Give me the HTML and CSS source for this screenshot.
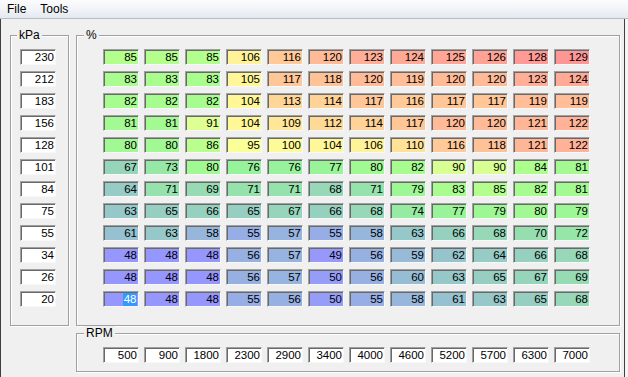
FILE: index.html
```html
<!DOCTYPE html>
<html>
<head>
<meta charset="utf-8">
<link rel="stylesheet" href="styles.css">
</head>
<body>
<div class="menubar">
  <span class="menu-item">File</span>
  <span class="menu-item">Tools</span>
</div>
<div class="client">
  <div class="group group-kpa">
    <span class="group-label">kPa</span>
    <div class="col">
      <div class="box">230</div>
      <div class="box">212</div>
      <div class="box">183</div>
      <div class="box">156</div>
      <div class="box">128</div>
      <div class="box">101</div>
      <div class="box">84</div>
      <div class="box">75</div>
      <div class="box">55</div>
      <div class="box">34</div>
      <div class="box">26</div>
      <div class="box">20</div>
    </div>
  </div>
  <div class="right">
    <div class="group group-ve">
      <span class="group-label">%</span>
      <div class="grid">
        <div class="box ve">85</div><div class="box ve">85</div><div class="box ve">85</div><div class="box ve">106</div><div class="box ve">116</div><div class="box ve">120</div><div class="box ve">123</div><div class="box ve">124</div><div class="box ve">125</div><div class="box ve">126</div><div class="box ve">128</div><div class="box ve">129</div>
        <div class="box ve">83</div><div class="box ve">83</div><div class="box ve">83</div><div class="box ve">105</div><div class="box ve">117</div><div class="box ve">118</div><div class="box ve">120</div><div class="box ve">119</div><div class="box ve">120</div><div class="box ve">120</div><div class="box ve">123</div><div class="box ve">124</div>
        <div class="box ve">82</div><div class="box ve">82</div><div class="box ve">82</div><div class="box ve">104</div><div class="box ve">113</div><div class="box ve">114</div><div class="box ve">117</div><div class="box ve">116</div><div class="box ve">117</div><div class="box ve">117</div><div class="box ve">119</div><div class="box ve">119</div>
        <div class="box ve">81</div><div class="box ve">81</div><div class="box ve">91</div><div class="box ve">104</div><div class="box ve">109</div><div class="box ve">112</div><div class="box ve">114</div><div class="box ve">117</div><div class="box ve">120</div><div class="box ve">120</div><div class="box ve">121</div><div class="box ve">122</div>
        <div class="box ve">80</div><div class="box ve">80</div><div class="box ve">86</div><div class="box ve">95</div><div class="box ve">100</div><div class="box ve">104</div><div class="box ve">106</div><div class="box ve">110</div><div class="box ve">116</div><div class="box ve">118</div><div class="box ve">121</div><div class="box ve">122</div>
        <div class="box ve">67</div><div class="box ve">73</div><div class="box ve">80</div><div class="box ve">76</div><div class="box ve">76</div><div class="box ve">77</div><div class="box ve">80</div><div class="box ve">82</div><div class="box ve">90</div><div class="box ve">90</div><div class="box ve">84</div><div class="box ve">81</div>
        <div class="box ve">64</div><div class="box ve">71</div><div class="box ve">69</div><div class="box ve">71</div><div class="box ve">71</div><div class="box ve">68</div><div class="box ve">71</div><div class="box ve">79</div><div class="box ve">83</div><div class="box ve">85</div><div class="box ve">82</div><div class="box ve">81</div>
        <div class="box ve">63</div><div class="box ve">65</div><div class="box ve">66</div><div class="box ve">65</div><div class="box ve">67</div><div class="box ve">66</div><div class="box ve">68</div><div class="box ve">74</div><div class="box ve">77</div><div class="box ve">79</div><div class="box ve">80</div><div class="box ve">79</div>
        <div class="box ve">61</div><div class="box ve">63</div><div class="box ve">58</div><div class="box ve">55</div><div class="box ve">57</div><div class="box ve">55</div><div class="box ve">58</div><div class="box ve">63</div><div class="box ve">66</div><div class="box ve">68</div><div class="box ve">70</div><div class="box ve">72</div>
        <div class="box ve">48</div><div class="box ve">48</div><div class="box ve">48</div><div class="box ve">56</div><div class="box ve">57</div><div class="box ve">49</div><div class="box ve">56</div><div class="box ve">59</div><div class="box ve">62</div><div class="box ve">64</div><div class="box ve">66</div><div class="box ve">68</div>
        <div class="box ve">48</div><div class="box ve">48</div><div class="box ve">48</div><div class="box ve">56</div><div class="box ve">57</div><div class="box ve">50</div><div class="box ve">56</div><div class="box ve">60</div><div class="box ve">63</div><div class="box ve">65</div><div class="box ve">67</div><div class="box ve">69</div>
        <div class="box ve"><span class="sel">48</span></div><div class="box ve">48</div><div class="box ve">48</div><div class="box ve">55</div><div class="box ve">56</div><div class="box ve">50</div><div class="box ve">55</div><div class="box ve">58</div><div class="box ve">61</div><div class="box ve">63</div><div class="box ve">65</div><div class="box ve">68</div>
      </div>
    </div>
    <div class="group group-rpm">
      <span class="group-label">RPM</span>
      <div class="grid">
        <div class="box">500</div><div class="box">900</div><div class="box">1800</div><div class="box">2300</div><div class="box">2900</div><div class="box">3400</div><div class="box">4000</div><div class="box">4600</div><div class="box">5200</div><div class="box">5700</div><div class="box">6300</div><div class="box">7000</div>
      </div>
    </div>
  </div>
</div>
<script src="script.js"></script>
</body>
</html>
```

FILE: styles.css
```css
* { box-sizing: border-box; }
html, body {
  margin: 0;
  padding: 0;
}
body {
  width: 628px;
  height: 377px;
  overflow: hidden;
  background: #f6f6f6;
  font-family: "Liberation Sans", Arial, sans-serif;
  color: #000;
}
.menubar {
  height: 19px;
  display: flex;
  align-items: center;
  background: linear-gradient(to bottom, #fcfcfd 0%, #f1f3f7 55%, #e3e8f0 100%);
  border-bottom: 1px solid #b8bec8;
  font-size: 12px;
  line-height: 18px;
}
.menu-item {
  padding: 0 7px;
}
.menu-item:first-child {
  padding-left: 7px;
  padding-right: 7px;
}
.client {
  width: 625px;
  height: 358px;
  background: #f0f0f0;
  border-left: 1px solid #404040;
  border-right: 1px solid #404040;
  display: flex;
  align-items: flex-start;
  gap: 7px;
  padding: 16px 0 0 9px;
}
.group {
  position: relative;
  border: 1px solid #a0a0a0;
  box-shadow: inset 1px 1px 0 #ffffff, 1px 1px 0 #ffffff;
}
.group-label {
  position: absolute;
  top: -8px;
  left: 6px;
  padding: 0 2px;
  background: #f0f0f0;
  font-size: 12px;
  line-height: 14px;
}
.group-ve .group-label { left: 7px; }
.group-rpm .group-label { left: 7px; }
.group-kpa {
  width: 59px;
  padding: 13px 0 18px 9px;
}
.col {
  display: flex;
  flex-direction: column;
  gap: 6px;
}
.right {
  display: flex;
  flex-direction: column;
  gap: 7px;
}
.group-ve {
  width: 544px;
  padding: 13px 0 18px 26px;
}
.group-rpm {
  width: 544px;
  padding: 13px 0 8px 26px;
}
.grid {
  display: grid;
  grid-template-columns: repeat(12, 36px);
  column-gap: 5px;
  row-gap: 6px;
}
.box {
  width: 36px;
  height: 16px;
  background: #ffffff;
  border: 1px solid;
  border-color: #a0a0a0 #f8f8f8 #f8f8f8 #a0a0a0;
  box-shadow: inset 1px 1px 0 #696969;
  font-size: 11.5px;
  line-height: 14px;
  text-align: right;
  padding-right: 1px;
  white-space: nowrap;
}
.sel {
  display: inline-block;
  background: #3399ff;
  color: #ffffff;
  line-height: 13px;
  padding: 0 0.5px;
  vertical-align: top;
  margin-top: 1px;
}
```

FILE: script.js
```js
(function () {
  var stops = [
    [48, [150, 150, 255]],
    [76, [150, 242, 155]],
    [84, [172, 255, 140]],
    [95, [250, 255, 152]],
    [105, [255, 246, 152]],
    [129, [255, 150, 150]]
  ];
  function colour(v) {
    if (v <= stops[0][0]) return 'rgb(' + stops[0][1].join(',') + ')';
    for (var i = 0; i < stops.length - 1; i++) {
      var a = stops[i][0], ca = stops[i][1];
      var b = stops[i + 1][0], cb = stops[i + 1][1];
      if (v <= b) {
        var t = (v - a) / (b - a);
        var c = [];
        for (var k = 0; k < 3; k++) c.push(Math.round(ca[k] + (cb[k] - ca[k]) * t));
        return 'rgb(' + c.join(',') + ')';
      }
    }
    return 'rgb(' + stops[stops.length - 1][1].join(',') + ')';
  }
  var cells = document.querySelectorAll('.ve');
  for (var i = 0; i < cells.length; i++) {
    var v = parseInt(cells[i].textContent, 10);
    cells[i].style.backgroundColor = colour(v);
  }
})();
```
